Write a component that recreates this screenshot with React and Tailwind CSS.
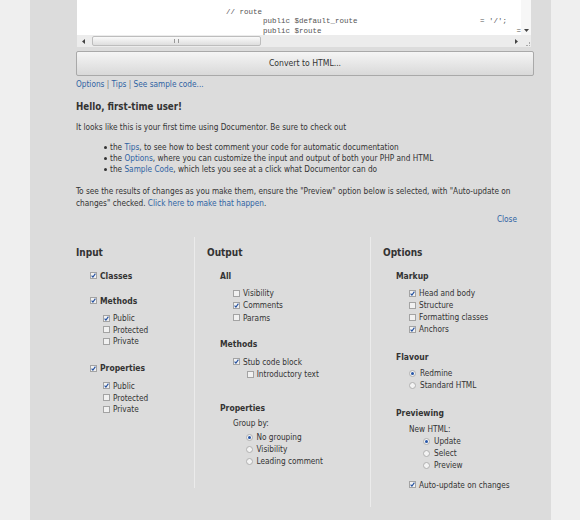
import clsx from "clsx";

function Check({ checked }) {
  return (
    <span className="flex h-[7px] w-[7px] shrink-0 items-center justify-center border border-[#a3a3a3] bg-[#f1f1f1]">
      {checked && (
        <svg width="5" height="5" viewBox="0 0 5 5">
          <path d="M0.6 2.7 L1.9 4.1 L4.4 0.6" stroke="#1f4d9e" strokeWidth="1.1" fill="none" />
        </svg>
      )}
    </span>
  );
}

function Radio({ checked }) {
  return (
    <span className="flex h-[7px] w-[7px] shrink-0 items-center justify-center rounded-full border border-[#b0b0b0] bg-[#f3f3f3]">
      {checked && <span className="h-[3px] w-[3px] rounded-full bg-[#2655a8]" />}
    </span>
  );
}

function CheckRow({ checked, label, bold, className }) {
  return (
    <div className={clsx("flex items-center", className)}>
      <Check checked={checked} />
      <span className={clsx("ml-[3px]", bold && "text-[8.5px] font-bold")}>{label}</span>
    </div>
  );
}

function RadioRow({ checked, label, className }) {
  return (
    <div className={clsx("flex items-center", className)}>
      <Radio checked={checked} />
      <span className="ml-[4px]">{label}</span>
    </div>
  );
}

function Heading({ children }) {
  return <div className="h-[12px] text-[10px] leading-[12px] font-bold">{children}</div>;
}

function Sub({ children, className }) {
  return <div className={clsx("h-[12px] text-[8.5px] leading-[12px] font-bold", className)}>{children}</div>;
}

function Arrow({ dir }) {
  const d = {
    left: "M3 0 L0 2.5 L3 5 Z",
    right: "M0 0 L3 2.5 L0 5 Z",
    down: "M0 0 L5 0 L2.5 3 Z",
  }[dir];
  return (
    <svg width={dir === "down" ? 5 : 3} height={dir === "down" ? 3 : 5} viewBox={dir === "down" ? "0 0 5 3" : "0 0 3 5"}>
      <path d={d} fill="#444" />
    </svg>
  );
}

function CodeBox() {
  return (
    <div className="ml-[1px] mr-[3px] flex h-[47px] flex-col bg-white">
      <div className="flex h-[35px]">
        <div className="flex-1 overflow-hidden pt-[7.5px] font-['Liberation_Mono',monospace] text-[7.5px] leading-[9.5px] whitespace-pre text-[#555]">
          <div className="pl-[149px]">// route</div>
          <div className="flex pl-[186px]">
            <span className="w-[217px]">public $default_route</span>
            <span>= '/';</span>
          </div>
          <div className="flex pl-[186px]">
            <span className="w-[254px]">public $route</span>
            <span>=</span>
          </div>
        </div>
        <div className="flex w-[10px] flex-col items-center justify-end bg-[#f7f7f7] pb-[3px]">
          <Arrow dir="down" />
        </div>
      </div>
      <div className="flex h-[12px]">
        <div className="flex flex-1 items-center bg-[#ececec]">
          <div className="flex w-[12px] justify-center">
            <Arrow dir="left" />
          </div>
          <div className="ml-[3px] flex h-[10px] w-[169px] items-center justify-center rounded-[2px] border border-[#bdbdbd] bg-gradient-to-b from-[#fafafa] to-[#dedede]">
            <span className="h-[4px] w-[5px] border-x border-[#999]" />
          </div>
          <div className="flex-1" />
          <div className="flex w-[10px] justify-center">
            <Arrow dir="right" />
          </div>
        </div>
        <div className="flex w-[10px] items-end justify-end bg-[#ececec] p-[1px]">
          <span className="h-[4px] w-[4px] border-r border-b border-dotted border-[#aaa]" />
        </div>
      </div>
    </div>
  );
}

export default function App() {
  return (
    <div className="min-h-[520px] bg-[#efefef] font-['DejaVu_Sans_Condensed','DejaVu_Sans',sans-serif] text-[8.2px] text-[#333]">
      <div className="ml-[30px] min-h-[520px] w-[521px] bg-[#dcdcdc] pr-[17px] pl-[46px]">
        <CodeBox />

        <button className="mt-[3.7px] flex h-[25px] w-full items-center justify-center rounded-[2px] border border-[#a9a9a9] bg-gradient-to-b from-[#f5f5f5] to-[#d9d9d9] text-[8.6px] text-[#333]">
          Convert to HTML...
        </button>

        <div className="mt-[2.6px] h-[12px] leading-[12px]">
          <span className="text-[#2f63a3]">Options</span> <span className="text-[#777]">|</span>{" "}
          <span className="text-[#2f63a3]">Tips</span> <span className="text-[#777]">|</span>{" "}
          <span className="text-[#2f63a3]">See sample code...</span>
        </div>

        <div className="mr-[17px]">
          <div className="mt-[11px] h-[12px] text-[9.7px] leading-[12px] font-bold">Hello, first-time user!</div>
          <p className="mt-[8px] h-[12px] leading-[12px]">
            It looks like this is your first time using Documentor. Be sure to check out
          </p>
          <ul className="mt-[8.5px] pl-[28px]">
            <li className="flex h-[11px] items-center">
              <span className="h-[3px] w-[3px] rounded-full bg-[#333]" />
              <span className="ml-[3px]">
                the <span className="text-[#2f63a3]">Tips</span>, to see how to best comment your code for automatic documentation
              </span>
            </li>
            <li className="flex h-[11px] items-center">
              <span className="h-[3px] w-[3px] rounded-full bg-[#333]" />
              <span className="ml-[3px]">
                the <span className="text-[#2f63a3]">Options</span>, where you can customize the input and output of both your PHP and HTML
              </span>
            </li>
            <li className="flex h-[11px] items-center">
              <span className="h-[3px] w-[3px] rounded-full bg-[#333]" />
              <span className="ml-[3px]">
                the <span className="text-[#2f63a3]">Sample Code</span>, which lets you see at a click what Documentor can do
              </span>
            </li>
          </ul>
          <p className="mt-[9.9px] leading-[12px] whitespace-nowrap">
            To see the results of changes as you make them, ensure the "Preview" option below is selected, with "Auto-update on
            <br />
            changes" checked. <span className="text-[#2f63a3]">Click here to make that happen</span>.
          </p>
          <div className="mt-[4.6px] h-[12px] text-right leading-[12px] text-[#2f63a3]">Close</div>
        </div>

        <div className="mt-[11.7px] flex items-start leading-[12px]">
          <div className="w-[118px] pt-[9.7px]">
            <Heading>Input</Heading>
            <CheckRow checked bold label="Classes" className="mt-[11px] ml-[14px] h-[12px]" />
            <CheckRow checked bold label="Methods" className="mt-[13px] ml-[14px] h-[12px]" />
            <div className="mt-[5.6px] ml-[27px]">
              <CheckRow checked label="Public" className="h-[11.7px]" />
              <CheckRow label="Protected" className="h-[11.7px]" />
              <CheckRow label="Private" className="h-[11.7px]" />
            </div>
            <CheckRow checked bold label="Properties" className="mt-[15px] ml-[14px] h-[12px]" />
            <div className="mt-[5.7px] ml-[27px]">
              <CheckRow checked label="Public" className="h-[11.7px]" />
              <CheckRow label="Protected" className="h-[11.7px]" />
              <CheckRow label="Private" className="h-[11.7px]" />
            </div>
          </div>

          <div className="w-[176px] border-l border-[#ebebeb] pt-[9.7px] pb-[21px] pl-[12px]">
            <Heading>Output</Heading>
            <Sub className="mt-[11px] ml-[13px]">All</Sub>
            <div className="mt-[5.3px] ml-[26px]">
              <CheckRow label="Visibility" className="h-[12.3px]" />
              <CheckRow checked label="Comments" className="h-[12.3px]" />
              <CheckRow label="Params" className="h-[12.3px]" />
            </div>
            <Sub className="mt-[14.4px] ml-[13px]">Methods</Sub>
            <CheckRow checked label="Stub code block" className="mt-[5.4px] ml-[26px] h-[12.3px]" />
            <CheckRow label="Introductory text" className="ml-[39.7px] h-[12.3px]" />
            <Sub className="mt-[22px] ml-[13px]">Properties</Sub>
            <div className="mt-[3px] ml-[26px] h-[12px]">Group by:</div>
            <div className="mt-[2px] ml-[38.5px]">
              <RadioRow checked label="No grouping" className="h-[12px]" />
              <RadioRow label="Visibility" className="h-[12px]" />
              <RadioRow label="Leading comment" className="h-[12px]" />
            </div>
          </div>

          <div className="flex-1 border-l border-[#ebebeb] pt-[9.7px] pb-[16px] pl-[12px]">
            <Heading>Options</Heading>
            <Sub className="mt-[11px] ml-[13px]">Markup</Sub>
            <div className="mt-[5.6px] ml-[26px]">
              <CheckRow checked label="Head and body" className="h-[12px]" />
              <CheckRow label="Structure" className="h-[12px]" />
              <CheckRow label="Formatting classes" className="h-[12px]" />
              <CheckRow checked label="Anchors" className="h-[12px]" />
            </div>
            <Sub className="mt-[15.4px] ml-[13px]">Flavour</Sub>
            <div className="mt-[4.6px] ml-[26px]">
              <RadioRow checked label="Redmine" className="h-[12px]" />
              <RadioRow label="Standard HTML" className="h-[12px]" />
            </div>
            <Sub className="mt-[15.4px] ml-[13px]">Previewing</Sub>
            <div className="mt-[4.6px] ml-[26px] h-[12px]">New HTML:</div>
            <div className="ml-[40px]">
              <RadioRow checked label="Update" className="h-[12px]" />
              <RadioRow label="Select" className="h-[12px]" />
              <RadioRow label="Preview" className="h-[12px]" />
            </div>
            <CheckRow checked label="Auto-update on changes" className="mt-[7.7px] ml-[26px] h-[12px]" />
          </div>
        </div>
      </div>
    </div>
  );
}
